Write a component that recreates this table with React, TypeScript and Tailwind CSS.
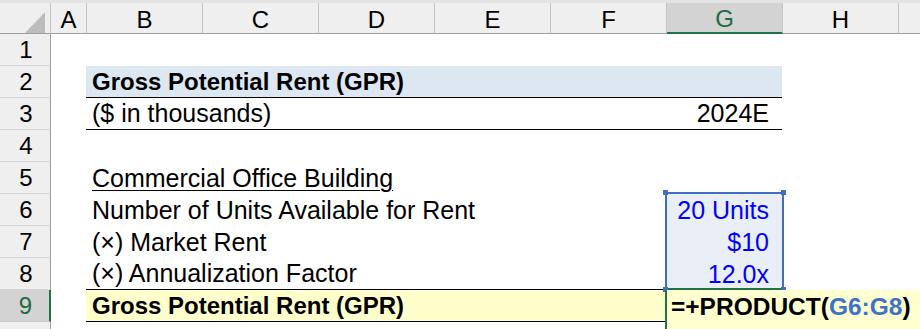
import React from "react";

const FONT = "font-['Liberation_Sans',Arial,sans-serif]";

type ColHead = { label: string; w: string; active?: boolean };

const heads: ColHead[] = [
  { label: "A", w: "w-[36px]" },
  { label: "B", w: "w-[116px]" },
  { label: "C", w: "w-[116px]" },
  { label: "D", w: "w-[116px]" },
  { label: "E", w: "w-[116px]" },
  { label: "F", w: "w-[116px]" },
  { label: "G", w: "w-[116px]", active: true },
  { label: "H", w: "w-[116px]" },
];

function RowHead({ n, active }: { n: number; active?: boolean }) {
  return (
    <div
      className={
        active
          ? "w-[51px] h-full shrink-0 flex items-center justify-center bg-[#d3d3d3] text-[#1e6b41] border-r-2 border-r-[#217346] border-b border-b-[#c9c9c9]"
          : "w-[51px] h-full shrink-0 flex items-center justify-center bg-[#efefef] text-black border-r border-r-[#9e9e9e] border-b border-b-[#d4d4d4]"
      }
    >
      <span className="text-[24px] leading-[25px] pl-[2px]">{n}</span>
    </div>
  );
}

function Row({ n, active, children }: { n: number; active?: boolean; children?: React.ReactNode }) {
  return (
    <div className="flex h-[32px]">
      <RowHead n={n} active={active} />
      <div className="w-[35px] shrink-0" />
      {children}
    </div>
  );
}

// label spanning B:F, plus an input value in G
function LabelRow({ n, label, value, ruled }: { n: number; label: string; value: string; ruled?: boolean }) {
  return (
    <Row n={n}>
      <div
        className={`w-[580px] shrink-0 flex items-center pl-[6px] text-[25px] leading-[25px] whitespace-nowrap ${
          ruled ? "border-b border-b-black" : ""
        }`}
      >
        {label}
      </div>
      <div className="w-[116px] shrink-0 flex items-center justify-end pr-[13px] bg-[#e9eef7] text-[#0000ff] text-[25px] leading-[25px]">
        {value}
      </div>
    </Row>
  );
}

export default function App() {
  return (
    <div className={`${FONT} relative w-[920px] h-[329px] overflow-hidden bg-white text-black`}>
      <div className="h-[3px] bg-[#e3e3e3]" />

      {/* column headers */}
      <div className="flex h-[31px] bg-[#efefef]">
        <div className="w-[51px] shrink-0 border-r border-r-[#c4c4c4] border-b border-b-[#9e9e9e]">
          <svg width="50" height="30" viewBox="0 0 50 30">
            <polygon points="45,9 45,30 25,30" fill="#bdbdbd" />
          </svg>
        </div>
        {heads.map((h) => (
          <div
            key={h.label}
            className={
              h.active
                ? `${h.w} shrink-0 flex items-center justify-center bg-[#d3d3d3] text-[#1e6b41] border-r border-r-[#c4c4c4] border-b-2 border-b-[#217346]`
                : `${h.w} shrink-0 flex items-center justify-center border-r border-r-[#c4c4c4] border-b border-b-[#9e9e9e]`
            }
          >
            <span className="text-[24px] leading-[25px] pt-[2px]">{h.label}</span>
          </div>
        ))}
        <div className="flex-1 border-b border-b-[#9e9e9e]" />
      </div>

      <Row n={1} />

      <Row n={2}>
        <div className="w-[696px] shrink-0 flex items-center pl-[6px] bg-[#dde7f1] border-b border-b-black font-bold text-[24px] leading-[25px]">
          Gross Potential Rent (GPR)
        </div>
      </Row>

      <Row n={3}>
        <div className="w-[696px] shrink-0 flex items-center justify-between pl-[6px] pr-[13px] border-b border-b-black text-[25px] leading-[25px]">
          <span>($ in thousands)</span>
          <span>2024E</span>
        </div>
      </Row>

      <Row n={4} />

      <Row n={5}>
        <div className="w-[580px] shrink-0 flex items-center pl-[6px] text-[25px] leading-[25px]">
          <span className="underline decoration-1 underline-offset-[3px]">Commercial Office Building</span>
        </div>
      </Row>

      <LabelRow n={6} label="Number of Units Available for Rent" value="20 Units" />
      <LabelRow n={7} label="(×) Market Rent" value="$10" />
      <LabelRow n={8} label="(×) Annualization Factor" value="12.0x" ruled />

      <Row n={9} active>
        <div className="w-[580px] shrink-0 flex items-center pl-[6px] bg-[#ffffcc] border-b border-b-black font-bold text-[24px] leading-[25px]">
          Gross Potential Rent (GPR)
        </div>
      </Row>

      <Row n={10} />

      {/* range selection G6:G8 */}
      <div className="absolute left-[665px] top-[192px] w-[119px] h-[98px] border-2 border-[#3f6fc4] border-b-[#217346]">
        <div className="absolute -left-[4px] -top-[4px] w-[5px] h-[5px] bg-[#3f6fc4]" />
        <div className="absolute -right-[4px] -top-[4px] w-[5px] h-[5px] bg-[#3f6fc4]" />
        <div className="absolute -left-[4px] -bottom-[4px] w-[5px] h-[5px] bg-[#3f6fc4]" />
        <div className="absolute -right-[4px] -bottom-[4px] w-[5px] h-[5px] bg-[#3f6fc4]" />
      </div>

      {/* in-cell editor for G9 */}
      <div className="absolute left-[665px] top-[290px] right-0 bottom-0 bg-[#ffffcf] border-l-2 border-l-[#217346] pl-[4px] pt-[4px]">
        <span className="font-bold text-[24.5px] leading-[25px] whitespace-nowrap">
          =+PRODUCT(<span className="text-[#3b73c8]">G6:G8</span>)
        </span>
      </div>
    </div>
  );
}
